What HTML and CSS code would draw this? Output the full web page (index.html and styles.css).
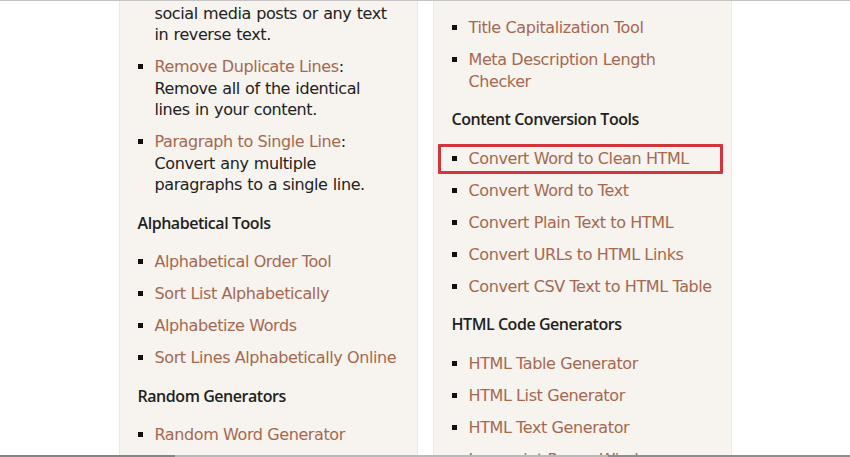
FILE: index.html
```html
<!DOCTYPE html>
<html lang="en">
<head>
<meta charset="utf-8">
<title>Tools</title>
<link rel="stylesheet" href="styles.css">
</head>
<body>
<div class="viewport">
  <div class="page">
    <section class="panel">
      <ul class="tools">
        <li><a href="#">Reverse Text</a>: Turn around all<br>social media posts or any text in reverse text.</li>
        <li><a href="#">Remove Duplicate Lines</a>: Remove all of the identical lines in your content.</li>
        <li><a href="#">Paragraph to Single Line</a>: Convert any multiple paragraphs to a single line.</li>
      </ul>
      <h3 class="group-title">Alphabetical Tools</h3>
      <ul class="tools">
        <li><a href="#">Alphabetical Order Tool</a></li>
        <li><a href="#">Sort List Alphabetically</a></li>
        <li><a href="#">Alphabetize Words</a></li>
        <li><a href="#">Sort Lines Alphabetically Online</a></li>
      </ul>
      <h3 class="group-title">Random Generators</h3>
      <ul class="tools">
        <li><a href="#">Random Word Generator</a></li>
        <li><a href="#">Random Number Generator</a></li>
      </ul>
    </section>
    <section class="panel panel-lower">
      <ul class="tools">
        <li><a href="#">Character Counter</a></li>
        <li><a href="#">Title Capitalization Tool</a></li>
        <li><a href="#">Meta Description Length Checker</a></li>
      </ul>
      <h3 class="group-title">Content Conversion Tools</h3>
      <ul class="tools">
        <li class="highlight"><a href="#">Convert Word to Clean HTML</a></li>
        <li><a href="#">Convert Word to Text</a></li>
        <li><a href="#">Convert Plain Text to HTML</a></li>
        <li><a href="#">Convert URLs to HTML Links</a></li>
        <li><a href="#">Convert CSV Text to HTML Table</a></li>
      </ul>
      <h3 class="group-title">HTML Code Generators</h3>
      <ul class="tools">
        <li><a href="#">HTML Table Generator</a></li>
        <li><a href="#">HTML List Generator</a></li>
        <li><a href="#">HTML Text Generator</a></li>
        <li><a href="#">Javascript Popup Window</a></li>
      </ul>
    </section>
  </div>
</div>
</body>
</html>
```
FILE: styles.css
```css
html, body {
  margin: 0;
  padding: 0;
  background: #ffffff;
}

.viewport {
  position: relative;
  height: 457px;
  box-sizing: border-box;
  overflow: hidden;
  border-top: 1px solid #c4c4c4;
}

/* window edge line at the bottom of the capture */
.viewport::after {
  content: "";
  position: absolute;
  left: 0;
  right: 0;
  bottom: 0;
  height: 2px;
  background: linear-gradient(to right, #858585 0, #858585 175px, #b9b9b9 175px, #b9b9b9 608px, #8e8e8e 608px);
}

.page {
  display: flex;
  justify-content: center;
  align-items: flex-start;
  gap: 15px;
  margin-top: -29px;
}

.panel {
  width: 299px;
  box-sizing: border-box;
  background: #f7f3ee;
  border: 1px solid #efe9e2;
  padding: 8px 18px 30px 18px;
}

.panel-lower {
  padding-top: 12px;
}

.tools {
  margin: 0;
  padding: 0 0 0 17px;
  list-style: square;
  font-family: "DejaVu Sans", Verdana, sans-serif;
  font-size: 16px;
  letter-spacing: -0.4px;
  word-spacing: 0.6px;
  line-height: 21.5px;
  color: #222222;
}

.tools li + li {
  margin-top: 10.5px;
}

.tools li::marker {
  color: #111111;
}

.tools a {
  color: #a66850;
  text-decoration: none;
  word-spacing: 0;
}

.highlight {
  position: relative;
}

.highlight::after {
  content: "";
  position: absolute;
  left: -31px;
  right: -10px;
  top: -4px;
  bottom: -5px;
  border: 3px solid #d3353c;
  border-radius: 1px;
}

.group-title {
  margin: 16px 0 17.5px 0;
  font-family: "Open Sans", "Noto Sans", sans-serif;
  font-weight: 600;
  font-size: 16px;
  line-height: 22px;
  color: #1f1f1f;
  letter-spacing: -0.45px;
}
```
